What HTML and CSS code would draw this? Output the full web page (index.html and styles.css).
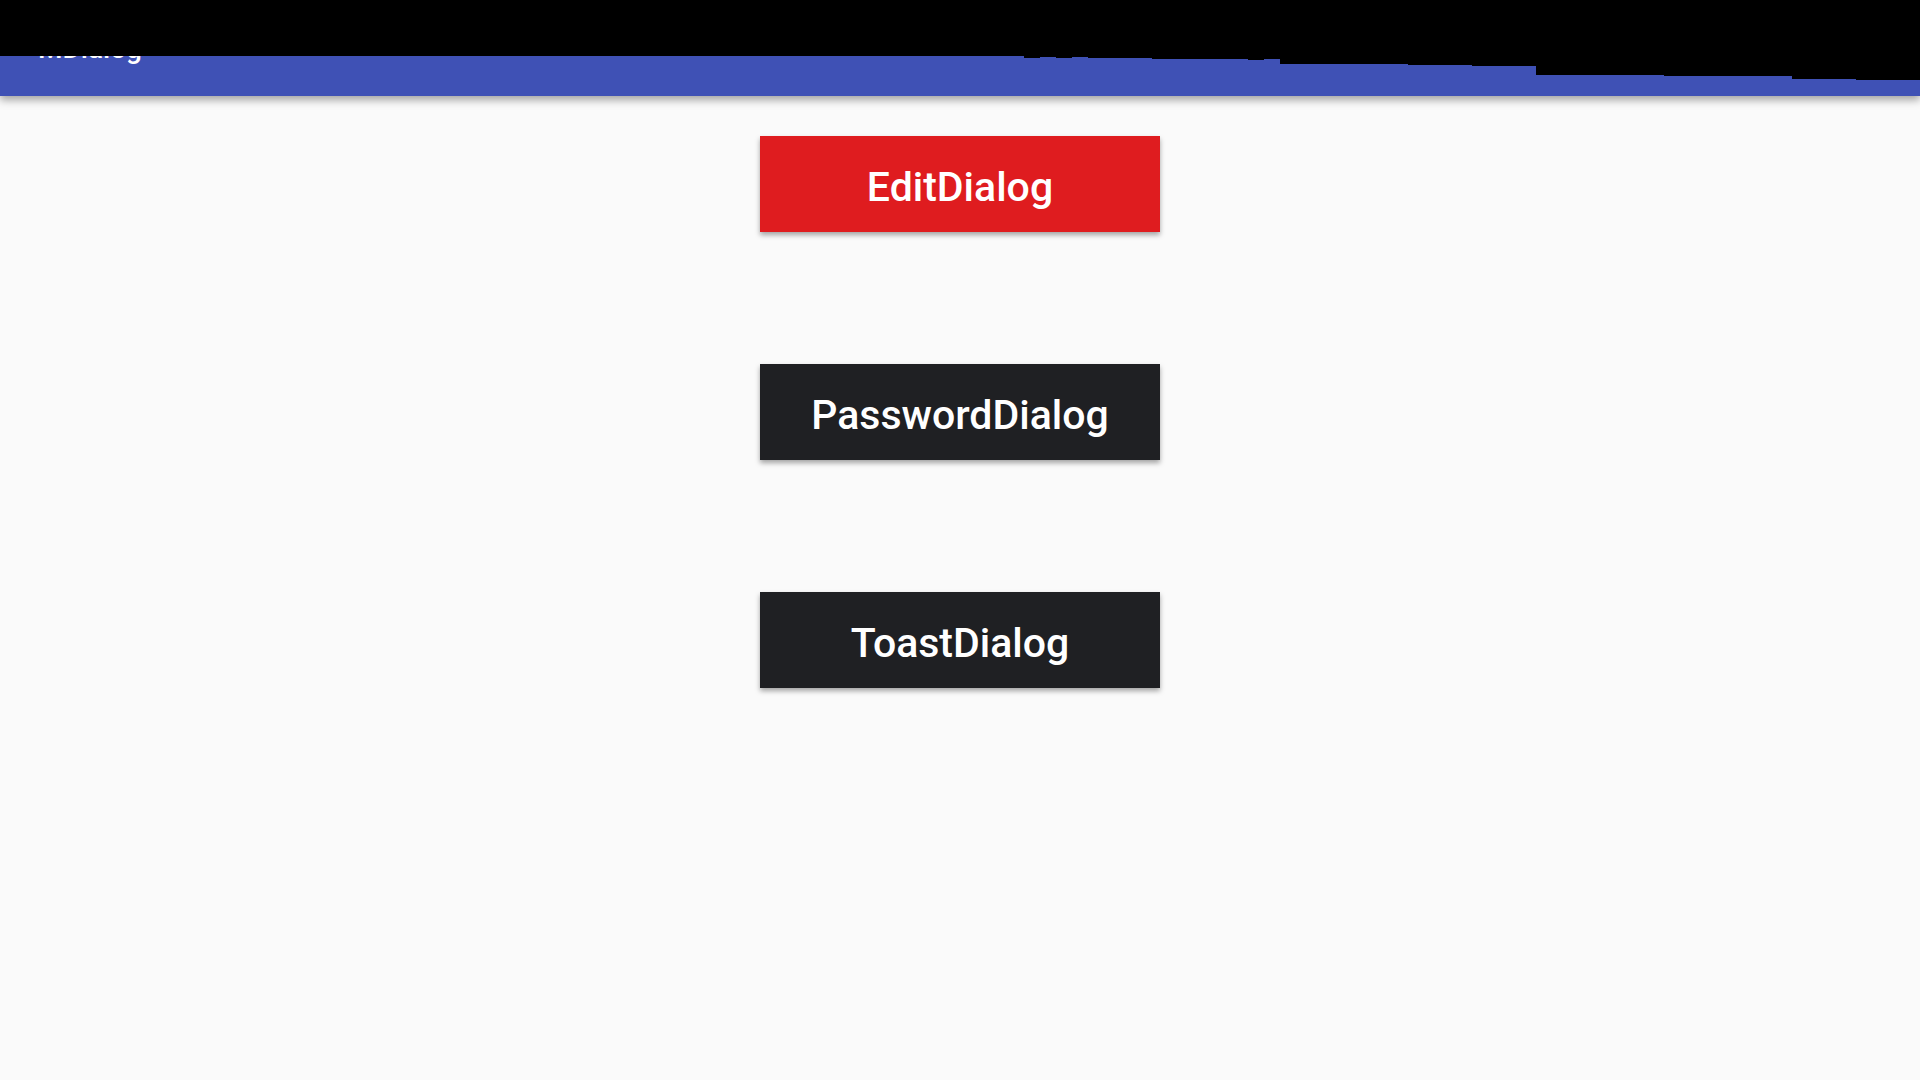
FILE: index.html
```html
<!DOCTYPE html>
<html>
<head>
<meta charset="utf-8">
<link rel="stylesheet" href="styles.css">
</head>
<body>
<header class="toolbar">
  <div class="title">MDialog</div>
  <div class="glitch"></div>
</header>
<main class="content">
  <button class="btn btn-red">EditDialog</button>
  <button class="btn btn-dark">PasswordDialog</button>
  <button class="btn btn-dark">ToastDialog</button>
</main>
</body>
</html>
```
FILE: styles.css
```css
html, body {
  margin: 0;
  padding: 0;
  background: #fafafa;
  font-family: Roboto, "Noto Sans", sans-serif;
}
body {
  width: 1920px;
  height: 1080px;
  overflow: hidden;
}
.toolbar {
  position: relative;
  height: 96px;
  background: #3f51b5;
  box-shadow: 0 4px 8px rgba(0, 0, 0, 0.35);
  display: flex;
  align-items: center;
  padding-left: 38px;
  z-index: 1;
}
.title {
  color: #ffffff;
  font-size: 28px;
  font-weight: 500;
  line-height: 1;
  padding-top: 2px;
}
.glitch {
  position: absolute;
  left: 0;
  top: 0;
  width: 1920px;
  height: 80px;
  background: #000;
  clip-path: polygon(
    0 0, 1920px 0,
    1920px 80px, 1856px 80px, 1856px 79px, 1792px 79px,
    1792px 76px, 1664px 76px, 1664px 75px, 1536px 75px,
    1536px 66px, 1472px 66px, 1472px 65px, 1408px 65px,
    1408px 64px, 1280px 64px, 1280px 59px, 1264px 59px,
    1264px 60px, 1248px 60px, 1248px 59px, 1152px 59px,
    1152px 58px, 1088px 58px, 1088px 57px, 1072px 57px,
    1072px 58px, 1056px 58px, 1056px 57px, 1040px 57px,
    1040px 58px, 1024px 58px, 1024px 56px, 0 56px
  );
}
.content {
  display: flex;
  flex-direction: column;
  align-items: center;
  gap: 132px;
  padding-top: 40px;
}
.btn {
  width: 400px;
  height: 96px;
  border: none;
  border-radius: 0;
  color: #ffffff;
  font-family: Roboto, "Noto Sans", sans-serif;
  font-size: 41px;
  font-weight: 500;
  box-shadow: 0 3px 5px rgba(0, 0, 0, 0.35);
  padding: 5px 0 0 0;
}
.btn-red {
  background: #df1c1f;
}
.btn-dark {
  background: #1f2023;
}
```
